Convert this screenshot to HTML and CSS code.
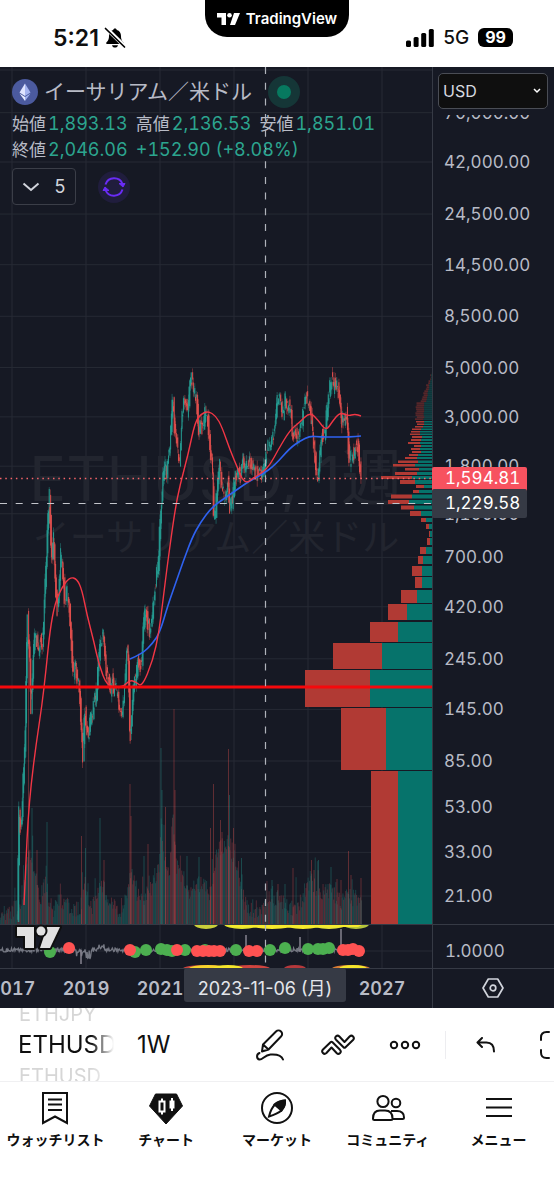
FILE: index.html
```html
<!DOCTYPE html>
<html lang="ja">
<head>
<meta charset="utf-8">
<meta name="viewport" content="width=device-width, initial-scale=1">
<title>ETHUSD 1W</title>
<link rel="stylesheet" href="styles.css">
</head>
<body>
<header class="status">
  <div class="status-time">
    <span>5:21</span>
    <svg width="22" height="22" viewBox="0 0 22 22" aria-label="消音">
      <path d="M11 1.500c-1 0-1.700.6-1.800 1.500C6.300 3.800 5 6 5 9c0 4-1.400 5.300-2.600 6.500-.6.700-.2 1.500.7 1.500h15.800c.9 0 1.300-.8.700-1.500C18.400 14.300 17 13 17 9c0-3-1.300-5.200-4.200-6C12.700 2.100 12 1.500 11 1.500zM8 18.200h6c-.3 1.500-1.500 2.300-3 2.300s-2.700-.8-3-2.300z"/>
      <path d="M2 1l19 18.500" stroke="#fff" stroke-width="4"/>
      <path d="M1.500 1.500l19 18.500" stroke="#000" stroke-width="1.700" stroke-linecap="round"/>
    </svg>
  </div>
  <div class="notch">
    <svg width="23" height="12" viewBox="0 0 23 12" fill="#fff"><path d="M0 0h9v12H4.500V4.500H0z"/><circle cx="12.500" cy="2.300" r="2.300"/><path d="M17 0h6l-5 12h-5z"/></svg>
    <span>TradingView</span>
  </div>
  <div class="status-net">
    <svg width="28" height="18" viewBox="0 0 28 18"><rect y="11.500" width="5" height="6.500" rx="1.500"/><rect x="7.600" y="8" width="5" height="10" rx="1.500"/><rect x="15.200" y="4" width="5" height="14" rx="1.500"/><rect x="22.800" width="5" height="18" rx="1.500"/></svg>
    <span>5G</span>
    <span class="battery">99</span>
  </div>
</header>

<main class="chart">
  <div class="plot">
    <svg id="plot" class="canvas" viewBox="0 67 432 857"></svg>
    <div class="legend">
      <div class="title">
        <svg width="26" height="26" viewBox="0 0 26 26"><circle cx="13" cy="13" r="13" fill="#4b5a9e"/><path d="M13 4.500L7.500 13.500 13 17z" fill="#dfe4ff"/><path d="M13 4.500l5.500 9L13 17z" fill="#a5b4f0"/><path d="M7.500 14.500L13 22v-4z" fill="#e8ecff"/><path d="M18.500 14.500L13 22v-4z" fill="#9fb0ee"/></svg>
        <h1>イーサリアム／米ドル</h1>
        <span class="live"></span>
      </div>
      <p class="ohlc"><span>始値<b>1,893.13</b></span><span>高値<b>2,136.53</b></span><span>安値<b>1,851.01</b></span></p>
      <p class="ohlc"><span>終値<b>2,046.06</b></span><b class="change">+152.90 (+8.08%)</b></p>
      <div class="tools">
        <button class="count" type="button"><svg width="18" height="10" viewBox="0 0 18 10"><path d="M1.500 1.500L9 8l7.500-6.500"/></svg><span>5</span></button>
        <button class="sync" type="button" aria-label="同期"><svg width="24" height="22" viewBox="0 0 24 22"><path d="M3.500 8.500A9 8.800 0 0 1 20.500 8M20.500 13.500A9 8.800 0 0 1 3.500 14"/><path d="M17 7.500h6l-2 3.500zM7 14.500H1L3 11z" fill="#6a2cf5" stroke-width="1"/></svg></button>
      </div>
    </div>
  </div>
  <div class="scale">
    <svg id="scale" class="canvas" viewBox="432 67 122 857"></svg>
    <select class="currency" aria-label="通貨"><option>USD</option></select>
  </div>
  <div class="study"><svg id="study" class="canvas" viewBox="0 924 432 44"></svg></div>
  <div class="study-scale">1.0000</div>
  <div class="times">
    <svg class="canvas" viewBox="0 968 432 40">
      <path d="M0 968.500H432" stroke="#363a45"/>
      <g class="year"><text x="12" y="995">2017</text><text x="86" y="995">2019</text><text x="160" y="995">2021</text><text x="382" y="995">2027</text></g>
      <rect x="184" y="968" width="162" height="34" rx="3" fill="#363a45"/>
      <text class="date" x="265" y="995">2023-11-06 (月)</text>
    </svg>
  </div>
  <button class="settings" type="button" aria-label="設定"><svg width="22" height="20" viewBox="0 0 22 20" fill="none" stroke="#d1d4dc" stroke-width="1.700" stroke-linejoin="round"><path d="M6.300 1h9.400L21 10l-5.300 9H6.300L1 10z"/><circle cx="11" cy="10" r="2.800"/></svg></button>
</main>

<section class="toolbar">
  <div class="wheel"><span>ETHJPY</span><strong>ETHUSD</strong><span>ETHUSD</span></div>
  <button class="interval" type="button">1W</button>
  <button class="tool" type="button" aria-label="描画"><svg width="32" height="34" viewBox="0 0 32 34"><path d="M8 16.500L21 3.500c1.500-1.500 3.500-1.500 5 0s1.500 3.500 0 5L13.500 21.500 7 23.500zM8 16.500l5.500 5"/><path d="M4.500 25C1 26.500 1.500 31 4.500 31.500c3 .5 5-4.500 11-5 6-.4 11 .5 12.500 5"/></svg></button>
  <button class="tool" type="button" aria-label="インジケーター"><svg width="34" height="22" viewBox="0 0 34 22"><path d="M2 15.500L9.500 8.200c.7-.7 1.300-.7 2 0l7.500 7.600c2.200 2.600-1.200 5.400-3.400 3.200L10.500 13.500 5.400 19C3 21.200-.3 18 2 15.500z"/><path d="M32 6L24.500 13.300c-.7.700-1.300.7-2 0L15 5.700C12.800 3.100 16.200.3 18.400 2.500L23.500 8 28.600 2.500C31 .3 34.300 3.500 32 6z"/></svg></button>
  <button class="tool" type="button" aria-label="その他"><svg width="32" height="10" viewBox="0 0 32 10"><circle cx="5" cy="5" r="3.200"/><circle cx="16" cy="5" r="3.200"/><circle cx="27" cy="5" r="3.200"/></svg></button>
  <span class="divider"></span>
  <button class="tool" type="button" aria-label="元に戻す"><svg width="20" height="16" viewBox="0 0 20 16"><path d="M6 1L1.500 5.500 6 10M2 5.500h8.500c5 0 7.500 3.500 7.500 9"/></svg></button>
  <button class="tool edge" type="button" aria-label="全画面"><svg width="32" height="30" viewBox="0 0 32 30"><path d="M10 2H7.500C4 2 2 4 2 7.500V10M2 20v2.500C2 26 4 28 7.500 28H10M22 2h2.500C28 2 30 4 30 7.500V10M30 20v2.500c0 3.500-2 5.500-5.500 5.500H22"/></svg></button>
</section>

<nav class="tabs">
  <a href="#watchlist"><svg width="28" height="34" viewBox="0 0 28 34"><path d="M2 2h24v30l-12-6.500L2 32zM7 8.500h14M7 13.500h14M7 19h14"/></svg><span>ウォッチリスト</span></a>
  <a href="#chart"><svg width="36" height="34" viewBox="0 0 36 34"><path d="M7.500 3h21L34.500 15 18 33 1.500 15z" fill="#111" stroke-width="1"/><path d="M11.500 10.500h5v10h-5zM14 7.500v3M14 20.500v3M24 7v13" stroke="#fff"/><path d="M21.500 9.500h5v8h-5z" fill="#fff" stroke="none"/></svg><span>チャート</span></a>
  <a href="#market"><svg width="34" height="34" viewBox="0 0 34 34"><circle cx="17" cy="17" r="15"/><path d="M25 9.500c.5 4-.8 6.500-3.500 10C18 22.500 14 24 9 25.500c1-4.500 2.500-8.500 6-12 3-2.500 6-3.800 10-4z"/><path d="M25 9.500c.5 4-.8 6.500-3.500 10l-7-6c3-2.800 6-3.800 10.500-4z" fill="#111"/></svg><span>マーケット</span></a>
  <a href="#community"><svg width="34" height="34" viewBox="0 0 34 34"><circle cx="12" cy="10.500" r="5.600"/><circle cx="25" cy="12" r="4.300"/><path d="M2 27.500C2 22.500 4 19.500 9 19.500h5c5 0 7.500 3 7.500 8 0 1-.5 1.500-1.500 1.500H3.500C2.500 29 2 28.500 2 27.500zM20 20h6c5 0 7 2.500 7 6.500 0 1-.5 1.500-1.500 1.500h-10"/></svg><span>コミュニティ</span></a>
  <a href="#menu"><svg width="28" height="34" viewBox="0 0 28 34"><path d="M1 8h26M1 16.500h26M1 25h26"/></svg><span>メニュー</span></a>
</nav>
<script src="chart.js"></script>
</body>
</html>
```
FILE: styles.css
```css
* { box-sizing: border-box; }
body { margin: 0; background: #fff; color: #0f0f0f; font-family: Inter, "Noto Sans CJK JP", sans-serif; }
h1, p { margin: 0; }
button { border: 0; padding: 0; background: none; font: inherit; color: inherit; display: flex; align-items: center; justify-content: center; }
svg { display: block; flex: none; }

.status { display: grid; grid-template-columns: 1fr auto 1fr; height: 67px; }
.status-time, .status-net { display: flex; align-items: center; padding-top: 8px; }
.status-time { gap: 5px; padding-left: 53px; font-size: 23px; font-weight: 600; }
.status-net { justify-content: flex-end; gap: 9px; padding-right: 41px; font-size: 19px; font-weight: 500; }
.battery { background: #000; color: #fff; border-radius: 6px; padding: 0 7px; font-size: 16px; line-height: 19px; font-weight: 700; }
.notch { display: flex; align-items: center; gap: 6px; height: 37px; padding: 0 12px; border-radius: 0 0 22px 22px; background: #000; color: #fff; font-size: 15px; font-weight: 600; }

.chart { display: grid; grid-template-columns: 432fr 122fr; background: #161924; color: #b8bbc6; font-variant-numeric: tabular-nums; }
.canvas { width: 100%; height: auto; }
.plot { display: grid; }
.plot > * { grid-area: 1 / 1; }
.scale { position: relative; }
.study-scale, .settings { box-shadow: inset 1px 1px #363a45; }
.study-scale { display: flex; align-items: center; padding: 10px 0 0 13px; font-size: 17px; }

.legend { z-index: 1; padding: 8px 12px; align-self: start; }
.title { display: flex; align-items: center; gap: 6px; height: 34px; }
.title h1 { font-size: 21px; line-height: 30px; font-weight: 400; color: #b8bbc6; white-space: nowrap; }
.live { width: 32px; height: 32px; margin-left: 10px; border: 9px solid #153637; border-radius: 50%; background: #07795f; }
.ohlc { display: flex; gap: 8px; padding-top: 4px; font-size: 17px; line-height: 22px; white-space: nowrap; }
.ohlc b { font-weight: 400; font-size: 18px; color: #2ca58f; padding-left: 2px; }
.ohlc .change { padding-left: 0; }
.tools { display: flex; align-items: center; gap: 22px; padding-top: 7px; }
.count { width: 64px; height: 37px; gap: 14px; border: 1px solid #3b3e48; border-radius: 4px; font-size: 18px; color: #d1d4dc; }
.count svg { fill: none; stroke: #d1d4dc; stroke-width: 2; }
.sync { width: 32px; height: 32px; border-radius: 50%; background: #201d3d; }
.sync svg { fill: none; stroke: #6a2cf5; stroke-width: 2; }

.currency { position: absolute; top: 6px; left: 6px; right: 6px; height: 36px; border: 1px solid #4a4d55; border-radius: 5px; padding: 0 4px; appearance: none; color: #d8dae0; font: 16px Inter, sans-serif; background: #0f0f0f url("data:image/svg+xml,%3Csvg xmlns='http://www.w3.org/2000/svg' width='8' height='6' fill='none' stroke='white' stroke-width='1.5'%3E%3Cpath d='M1 1l3 3 3-3'/%3E%3C/svg%3E") no-repeat right 6px center; }

.grid { stroke: #262a34; stroke-width: 1; }
.watermark { fill: #22252f; text-anchor: middle; font-family: Inter, "Noto Sans CJK JP", sans-serif; font-variant-numeric: normal; }
.watermark .big { font-size: 62px; }
.watermark .small { font-size: 37px; }
.price { fill: #b8bbc6; font-family: Inter, sans-serif; font-size: 17px; }
.price.tag { fill: #fff; }
.year { fill: #b8bbc6; font-family: Inter, sans-serif; font-size: 18px; font-weight: 600; text-anchor: middle; }
.date { fill: #e4e6eb; font-family: Inter, "Noto Sans CJK JP", sans-serif; font-size: 18px; font-variant-numeric: normal; text-anchor: middle; }

.toolbar { display: flex; align-items: center; height: 74px; padding-left: 18px; overflow: hidden; border-bottom: 1px solid #f0f0f2; }
.wheel { flex: none; display: flex; flex-direction: column; width: 96px; height: 74px; justify-content: center; overflow: hidden; white-space: nowrap; mask-image: linear-gradient(90deg, #000 76%, transparent); }
.wheel strong { flex: none; font-size: 24px; line-height: 38px; font-weight: 400; }
.wheel span { flex: none; padding-left: 1px; font-size: 20px; line-height: 24px; color: #d6d6d6; }
.interval { flex: none; margin-left: 23px; font-size: 24px; }
.tool { flex: none; }
.tool svg { fill: none; stroke: #111; stroke-width: 2; stroke-linejoin: round; stroke-linecap: round; }
.interval + .tool { margin-left: 85px; }
.tool + .tool { margin-left: 34px; }
.divider { flex: none; width: 1px; height: 28px; margin: 0 30px 0 24px; background: #ededf0; }
.toolbar .edge { margin-left: 43px; }

.tabs { display: grid; grid-template-columns: repeat(5, 1fr); padding-top: 9px; }
.tabs a { display: flex; flex-direction: column; align-items: center; gap: 4px; color: #0f0f0f; text-decoration: none; font-size: 14px; line-height: 22px; font-weight: 700; white-space: nowrap; }
.tabs svg { fill: none; stroke: #111; stroke-width: 2; }
```
FILE: chart.js
```js
const NS = "http://www.w3.org/2000/svg";
const UP = "#26a69a", DOWN = "#ef5350";
const RIGHT = 432, FLOOR = 924, WEEK = 0.71;

function add(parent, tag, attrs, text) {
  const el = document.createElementNS(NS, tag);
  for (const k in attrs) el.setAttribute(k, attrs[k]);
  if (text) el.textContent = text;
  parent.appendChild(el);
  return el;
}
let seed = 7;
function rand() {
  seed = (seed * 16807) % 2147483647;
  return seed / 2147483647;
}
function parse(s) { return s.trim().split(/\s+/).map(p => p.split(",").map(Number)); }
function at(points, x) {
  let i = 1;
  while (i < points.length - 1 && points[i][0] < x) i++;
  const [x0, y0] = points[i - 1], [x1, y1] = points[i];
  return y0 + (y1 - y0) * Math.max(0, Math.min(1, (x - x0) / (x1 - x0)));
}
function curve(points) {
  let d = `M${points[0]}`;
  for (let i = 1; i < points.length - 1; i++) {
    const [x, y] = points[i], [nx, ny] = points[i + 1];
    d += `Q${x},${y} ${(x + nx) / 2},${(y + ny) / 2}`;
  }
  return d + `L${points[points.length - 1]}`;
}
const priceY = p => 162 + 96.57 * Math.log(42000 / p);

const prices = [70000, 42000, 24500, 14500, 8500, 5000, 3000, 1800, 1100, 700, 420, 245, 145, 85, 53, 33, 21];
const years = [12, 86, 160, 234, 308, 382];

const closes = parse(`18,922 18.5,880 19.5,800 21,828 22.5,812 24,770 25.5,745 26.5,680 28,615 29,645 30,655 31.5,708 33,670 35,630
 37,640 39,650 41,640 43,642 45,600 47,555 48.5,520 50,495 51.5,545 53,565 54,535 56,585 58,615 60,580 61.5,552 63,565 65,600 68,592
 70,610 72,645 74,680 76,665 78,680 80,690 82,735 83.5,758 85,705 87,733 89,740 91,718 93,715 95,700 97,695 99,660 101,645 103,635
 104,630 106,665 108,675 111,690 112,675 114,692 117,688 119,705 122,720 125,690 127,652 128.5,654 129.5,690 130.3,742 131.5,725 134,685
 136,680 138,662 142,665 144,625 146,608 148,622 150,630 153,615 155,590 157,575 159,560 160.5,520 162,500 163.5,475 165,465
 167,475 169,455 171,440 173,397 175,428 177,445 180,465 182,420 184,405 186,405 188,415 190,385 192,378 194,390 197,400
 199,435 201,418 203,432 205,415 207,408 209,430 211,460 213,470 214,515 216,513 217,490 219,475 220,462 222,485 224,495 226,500
 228,480 230,508 233,500 235,480 238,472 241,475 243,458 246,468 249,465 252,462 255,470 257,475 263,476 265,465 267,453 269,445
 272,440 275,430 277,407 278.5,396 281,405 284,415 286,397 288,405 291,410 293,440 296,435 299,440 302,425 305,400 307,397 310,410
 312,420 314,445 316,460 318,483 320,460 322,430 325,440 328,405 330,389 332,379 334,387 336,381 338,388 340,400 342,425 344,420
 347,414 348,428 349.5,463 352,455 354,455 357,442 359,450 361,476`);
const slow = parse(`130,659 142,654 153,643 160,632 168,605 175,585 183,562 192,538 200,523 212,507 225,498 235,491 245,484 253,479
 263,474 275,465 290,448 300,441 310,436 320,437 335,437 350,437 361,436`);
const fast = parse(`24,905 26,860 28,820 31,785 36,745 42,705 46,670 50,630 55,603 62,587 70,577 77,579 82,590 87,615 94,642 99,665
 107,686 118,687 124,686 130,680 136,682 142,687 153,660 159,632 163,600 168,560 175,510 180,485 188,455 195,422 201,414 208,411
 216,416 222,427 230,450 238,469 242,479 247,483 253,478 262,473 270,465 278,450 290,430 300,422 310,412 318,420 326,431 332,422
 340,412 348,416 355,414 361,416`);
const volume = parse(`0,916 12,910 20,904 27,870 30,850 33,862 40,900 46,880 49,902 52,912 58,895 65,904 72,912 80,908 85,884 92,912
 100,880 108,899 118,912 124,902 130,876 134,878 140,904 148,894 155,876 159,870 161,815 165,862 170,868 173,812 176,862 182,880
 190,890 200,884 210,892 218,850 228,840 238,866 245,905 260,910 268,895 280,900 290,908 300,904 310,878 320,894 330,889 340,901
 352,896 361,901`);
const spikes = [[28.5, 640, 0], [32, 808, 1], [37, 850, 0], [47, 822, 1], [81.5, 836, 0], [85.5, 848, 1], [100, 818, 1], [104, 860, 0],
  [130, 784, 0], [131, 816, 0], [144, 856, 1], [148, 844, 0], [161, 748, 1], [162, 790, 1], [165.5, 807, 0], [174, 709, 0], [175, 790, 0],
  [187, 856, 1], [199, 857, 1], [210.5, 828, 0], [213.5, 784, 0], [220.5, 820, 0], [222, 832, 0], [228.5, 749, 0], [229.5, 795, 1], [233.5, 828, 0],
  [241.5, 858, 1], [272, 880, 1], [278, 884, 0], [285, 884, 1], [293, 868, 0], [311.5, 860, 0], [314, 870, 0], [318.5, 860, 1], [331, 867, 1],
  [337, 879, 0], [341, 880, 0], [348.5, 851, 0], [351, 875, 0], [361, 878, 0]];

/* top, bottom, left edge, red/teal split */
const profile = [[771, 924, 371, 398], [708, 770, 341, 386], [670, 707, 305, 370], [643, 669, 333, 382], [622, 642, 370, 398],
  [604, 620, 388, 407], [590, 603, 401, 417], [577, 588, 415, 422], [566, 576, 412, 422], [556, 564, 418, 423], [547, 554, 420, 426],
  [538, 545, 427, 430], [531, 537, 429, 430], [524, 529, 426, 429], [518, 522, 421, 426], [511, 516, 410, 421], [505.5, 509.5, 401, 414],
  [500, 504, 388, 409], [494.5, 498.5, 391, 412], [490, 493, 413, 419], [485, 488, 416, 424], [480, 484, 400, 415], [476, 479, 381, 412],
  [472, 475, 395, 417], [468, 470.5, 405, 419], [464, 466.5, 393, 415], [460.5, 463, 398, 418], [457, 459, 405, 417],
  [454, 456, 409, 418], [451, 453, 412, 421], [448, 450, 411, 420], [445, 447, 414, 421], [442, 444, 408, 420], [439, 441, 411, 421],
  [436, 438, 412, 422], [433.5, 435, 410, 420], [431, 432.5, 411, 420], [428.5, 430, 412, 421], [426, 427.5, 415, 423],
  [423.5, 425, 417, 424], [421, 422.5, 416, 424]];
for (let y = 418.5; y > 372; y -= 2) {
  const left = y > 402 ? 415 + rand() * 2 : 419 + (402 - y) * 0.4 + rand() * 2;
  profile.push([y, y + 1.2, left, left + (RIGHT - left) * 0.5]);
}

function drawPlot() {
  const svg = document.getElementById("plot");
  for (const x of years) add(svg, "path", { class: "grid", d: `M${x} 67V924` });
  add(svg, "path", { class: "grid", d: "M0 70H432" });
  for (const p of prices) add(svg, "path", { class: "grid", d: `M0 ${priceY(p)}H432` });
  const mark = add(svg, "g", { class: "watermark" });
  add(mark, "text", { class: "big", x: 216, y: 501 }, "ETHUSD, 1週");
  add(mark, "text", { class: "small", x: 216, y: 551 }, "イーサリアム／米ドル");

  for (let x = 0; x < 362; x += WEEK) {
    const top = at(volume, x) - 9 + rand() * 19;
    const high = rand() > 0.93 ? 10 + rand() * 12 : 0;
    add(svg, "path", { d: `M${x} ${FLOOR}V${Math.min(920, top - high)}`, stroke: rand() > 0.48 ? "#1d5f60" : "#803640", "stroke-width": 0.8, opacity: 0.7 });
  }
  for (const [x, y, up] of spikes) add(svg, "path", { d: `M${x} ${FLOOR}V${y}`, stroke: up ? UP : DOWN, "stroke-width": 0.9, opacity: 0.38 });

  for (const [t, b, l, s] of profile) {
    const fade = b < 420 ? 0.6 : 1;
    add(svg, "rect", { x: l, y: t, width: s - l, height: b - t, fill: "#b13a34", opacity: fade });
    add(svg, "rect", { x: s, y: t, width: RIGHT - s, height: b - t, fill: "#06736b", opacity: fade });
  }

  for (let x = 18; x < 361.5; x += WEEK) {
    const open = at(closes, x - WEEK) + (rand() - 0.5) * 16, close = at(closes, x + WEEK) + (rand() - 0.5) * 16;
    const color = close < open ? UP : DOWN;
    const hi = Math.min(open, close), lo = Math.max(open, close);
    add(svg, "path", { d: `M${x} ${hi - rand() * 6}V${Math.min(922, lo + rand() * 6)}`, stroke: color, "stroke-width": 0.6, opacity: 0.7 });
    add(svg, "path", { d: `M${x} ${hi}V${Math.min(922, lo)}`, stroke: color, "stroke-width": 1, opacity: 0.85 });
  }
  add(svg, "path", { d: curve(slow), fill: "none", stroke: "#2f62f0", "stroke-width": 1.6 });
  add(svg, "path", { d: curve(fast), fill: "none", stroke: "#f23645", "stroke-width": 1.4 });
  add(svg, "path", { d: "M0 687H432", stroke: "#f5090c", "stroke-width": 3 });
  add(svg, "path", { d: "M0 478.5H432", stroke: "#f7656a", "stroke-width": 1.4, "stroke-dasharray": "1.5 3.8" });
  add(svg, "path", { d: "M0 503.5H432", stroke: "#c3c5cb", "stroke-width": 1.2, "stroke-dasharray": "7 8.7" });
  add(svg, "path", { d: "M265.5 67V924", stroke: "#b0b3bb", "stroke-width": 1.2, "stroke-dasharray": "7 8.7" });
}

function drawScale() {
  const svg = document.getElementById("scale");
  for (const p of prices) {
    const label = p.toLocaleString("en-US", { minimumFractionDigits: 2 });
    add(svg, "text", { class: "price", x: 444, y: priceY(p) + 6 }, label);
  }
  add(svg, "rect", { x: 432, y: 67, width: 122, height: 48, fill: "#161924" });
  add(svg, "path", { d: "M432.5 67V924", stroke: "#363a45" });
  add(svg, "rect", { x: 432, y: 467, width: 95, height: 28, rx: 2, fill: "#f7525f" });
  add(svg, "rect", { x: 432, y: 489, width: 95, height: 29, rx: 2, fill: "#363a45" });
  add(svg, "text", { class: "price tag", x: 445, y: 484 }, "1,594.81");
  add(svg, "text", { class: "price tag", x: 445, y: 509 }, "1,229.58");
}

function drawStudy() {
  const svg = document.getElementById("study");
  for (const x of years) add(svg, "path", { class: "grid", d: `M${x} 924V968` });
  add(svg, "path", { class: "grid", d: "M0 951H432" });
  let d = "M0 950";
  for (let x = 1; x < 360; x += 0.7) {
    const dip = x > 76 && x < 92 ? 8 : 0, bump = x > 94 && x < 106 ? -5 : 0;
    d += `L${x} ${950 + dip * rand() + bump * rand() + (rand() - 0.5) * 4}`;
  }
  add(svg, "path", { d, fill: "none", stroke: "#747782", "stroke-width": 1.3 });
  add(svg, "path", { d: "M81 950V964M246 950V935M300 952V937M341 950V929", stroke: "#85828f", "stroke-width": 1.5 });
  const waves = [[206, 12, "#c9cf3a"], [242, 18, "#e6e62f"], [272, 24, "#f5ea2c"], [303, 20, "#f5ea2c"], [329, 18, "#e9e638"], [356, 13, "#b5c53b"]];
  for (const [cx, rx, fill] of waves) add(svg, "ellipse", { cx, cy: 924, rx, ry: 5, fill });
  add(svg, "path", { d: "M230 924H364L358 927H230z", fill: "#f5ea2c" });
  for (const [cx, rx, fill] of [[205, 22, "#c9453f"], [250, 20, "#d0443f"], [208, 19, "#f5d52c"], [228, 15, "#f5e62c"], [295, 11, "#b5383b"], [351, 19, "#d87b34"], [353, 14, "#f5e62c"]])
    add(svg, "ellipse", { cx, cy: 968.5, rx, ry: 3.5, fill });
  const dots = { "#4caf50": [[50, 952], [135, 952], [146, 950], [161, 949], [167, 950], [172, 951], [185, 950], [205, 950], [236, 950], [270, 950], [285, 948], [308, 949], [318, 949], [323, 949], [329, 948]],
    "#ff5252": [[69, 948], [130, 950], [177, 950], [197, 951], [203, 951], [209, 951], [214, 951], [220, 951], [249, 951], [257, 951], [343, 950], [348, 950], [353, 949], [359, 951]] };
  for (const fill in dots)
    for (const [cx, cy] of dots[fill]) add(svg, "circle", { cx, cy, r: 6, fill });
  add(svg, "path", { d: "M265.5 924V968", stroke: "#b0b3bb", "stroke-width": 1.2, "stroke-dasharray": "7 8.7" });
  add(svg, "path", { d: "M0 924.5H432", stroke: "#363a45" });
  const logo = add(svg, "g", { fill: "#e1e1e1", stroke: "#0f0f0f", "stroke-width": 4, "paint-order": "stroke", "stroke-linejoin": "round" });
  add(logo, "path", { d: "M17 927H34V948H25V936H17z" });
  add(logo, "path", { d: "M47 927H60L50 948H40z" });
  add(logo, "circle", { cx: 41, cy: 931, r: 4.5 });
}

drawPlot();
drawScale();
drawStudy();
```
